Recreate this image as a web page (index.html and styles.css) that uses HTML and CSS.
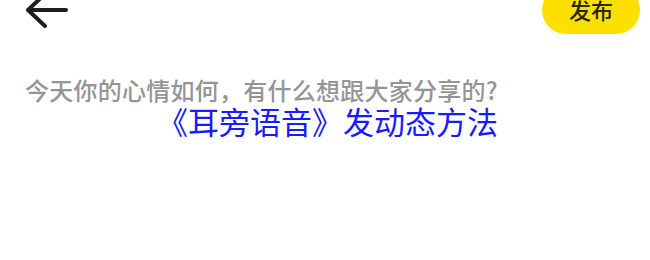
FILE: index.html
```html
<!DOCTYPE html>
<html lang="zh-CN">
<head>
<meta charset="utf-8">
<link rel="stylesheet" href="styles.css">
</head>
<body>
<div class="page">
  <header class="header">
    <span class="back">
      <svg width="50" height="48" viewBox="0 0 50 48">
        <path d="M45 24 H7 M24 8 L7 24 L24 40" fill="none" stroke="#1e1e1a" stroke-width="4" stroke-linecap="round" stroke-linejoin="round"/>
      </svg>
    </span>
    <button class="publish">发布</button>
  </header>
  <div class="placeholder">今天你的心情如何，有什么想跟大家分享的?</div>
  <div class="caption">《耳旁语音》发动态方法</div>
</div>
</body>
</html>
```
FILE: styles.css
```css
html, body {
  margin: 0;
  padding: 0;
  background: #ffffff;
}
body {
  font-family: "Noto Sans CJK SC", "Noto Sans", sans-serif;
  width: 650px;
  height: 260px;
  overflow: hidden;
}
.page {
  display: flex;
  flex-direction: column;
}
.header {
  display: flex;
  justify-content: space-between;
  align-items: center;
  height: 48px;
  margin-top: -14px;
  padding: 0 10px 0 21px;
}
.back {
  display: flex;
  width: 50px;
  height: 48px;
}
.publish {
  width: 98px;
  height: 48px;
  border: none;
  border-radius: 24px;
  background: #fde000;
  color: #26261c;
  font-family: "Noto Sans CJK SC", sans-serif;
  font-size: 22px;
  font-weight: 500;
  line-height: 48px;
  padding: 0 0 2px 0;
  display: flex;
  align-items: center;
  justify-content: center;
}
.placeholder {
  margin-top: 44px;
  padding-left: 25px;
  font-size: 24px;
  line-height: 24px;
  font-weight: 500;
  letter-spacing: 0.25px;
  color: #959595;
  white-space: nowrap;
}
.caption {
  margin-top: 3px;
  text-align: center;
  font-size: 31px;
  line-height: 31px;
  font-weight: 400;
  color: #1a1aff;
  padding-left: 5px;
  white-space: nowrap;
}
```
